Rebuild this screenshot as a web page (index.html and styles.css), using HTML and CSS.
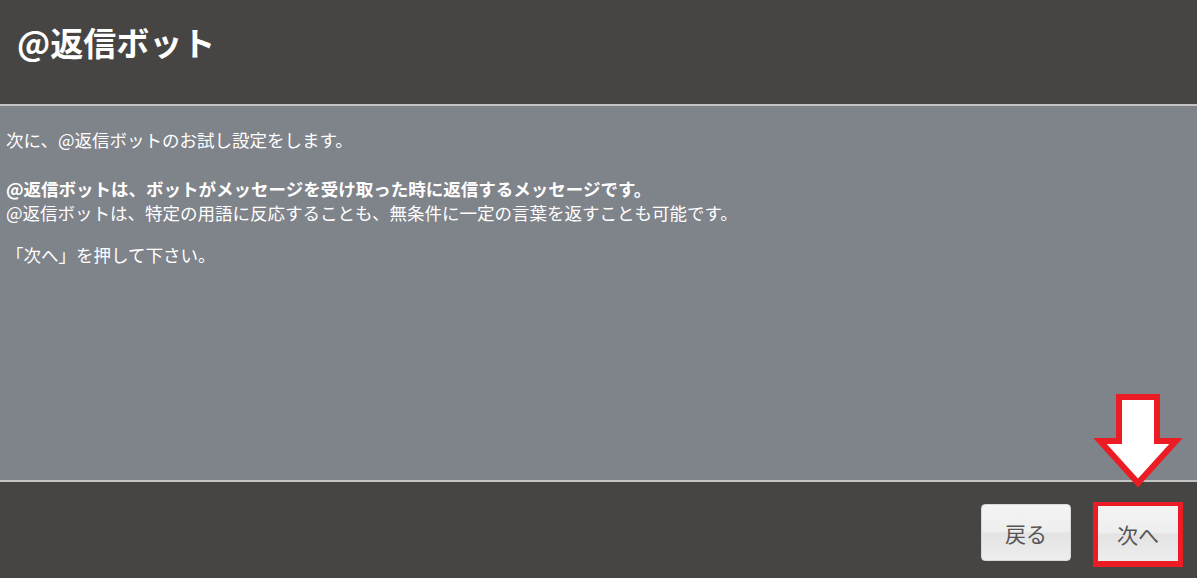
FILE: index.html
```html
<!DOCTYPE html>
<html lang="ja">
<head>
<meta charset="utf-8">
<link rel="stylesheet" href="styles.css">
</head>
<body>
<div class="page">
  <header class="head">
    <h1 class="title">@返信ボット</h1>
  </header>
  <main class="content">
    <p class="p1">次に、@返信ボットのお試し設定をします。</p>
    <p class="p2"><b>@返信ボットは、ボットがメッセージを受け取った時に返信するメッセージです。</b><br>@返信ボットは、特定の用語に反応することも、無条件に一定の言葉を返すことも可能です。</p>
    <p class="p3">「次へ」を押して下さい。</p>
  </main>
  <footer class="foot">
    <button class="btn">戻る</button>
    <span class="mark"><button class="btn btn-next">次へ</button></span>
  </footer>
  <svg class="arrow" width="100" height="105" viewBox="0 0 100 105">
    <polygon points="29,9 67,9 67,53 86,53 48,95 10,53 29,53" fill="#fff" stroke="#ec1c24" stroke-width="6" stroke-linejoin="miter"/>
  </svg>
</div>
</body>
</html>
```
FILE: styles.css
```css
html, body {
  margin: 0;
  padding: 0;
}
body {
  font-family: "Noto Sans CJK JP", "Noto Sans", sans-serif;
  background: #474543;
}
.page {
  position: relative;
  width: 1197px;
  height: 578px;
  display: flex;
  flex-direction: column;
  overflow: hidden;
}
.head {
  height: 104px;
  background: #474543;
  border-bottom: 2px solid #c4c4c4;
  display: flex;
  align-items: center;
  padding-left: 17px;
  box-sizing: content-box;
}
.title {
  margin: 0;
  margin-top: -20px;
  font-size: 33px;
  font-weight: 700;
  color: #fff;
  line-height: 1;
}
.content {
  flex: 1;
  background: #7f838a;
  color: #fff;
  font-size: 17.5px;
  line-height: 24px;
  padding: 22px 6px 0;
  border-bottom: 2px solid #c4c4c4;
}
.content p {
  margin: 0;
}
.p2 {
  margin-top: 25px !important;
}
.p3 {
  margin-top: 18px !important;
}
.content b {
  font-weight: 700;
}
.foot {
  height: 96px;
  flex: none;
  background: #474543;
  display: flex;
  justify-content: flex-end;
  align-items: flex-start;
  padding: 20px 14px 0 0;
  box-sizing: border-box;
  gap: 22px;
}
.btn {
  width: 90px;
  height: 57px;
  margin-top: 2px;
  border: 1px solid #d8d8d8;
  border-radius: 4px;
  background: linear-gradient(#f4f4f4 0%, #eeeeee 48%, #e3e3e3 52%, #eeeeee 100%);
  color: #555;
  font-family: "Noto Sans CJK JP", sans-serif;
  font-size: 21px;
  padding: 0;
}
.mark {
  display: block;
  border: 5px solid #ec1c24;
  border-bottom-width: 6px;
  border-top-width: 4px;
}
.btn-next {
  display: block;
  width: 80px;
  height: 55px;
  margin: 0;
  border-radius: 0;
  border: none;
}
.arrow {
  position: absolute;
  left: 1090px;
  top: 388px;
}
```
